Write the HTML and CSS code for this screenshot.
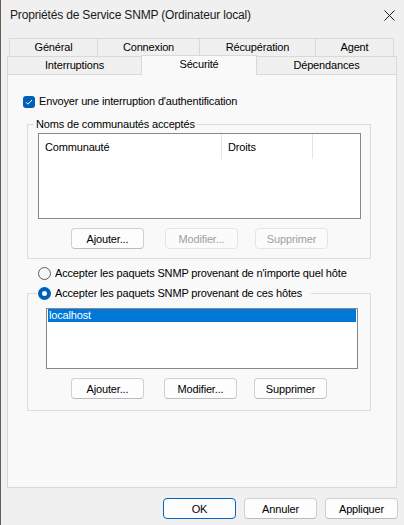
FILE: index.html
```html
<!DOCTYPE html>
<html lang="fr">
<head>
<meta charset="utf-8">
<title>Propriétés de Service SNMP</title>
<link rel="stylesheet" href="styles.css">
</head>
<body>
<div class="window">
  <div class="titlebar">
    <span class="title">Propriétés de Service SNMP (Ordinateur local)</span>
    <svg class="close" width="11" height="11" viewBox="0 0 11 11"><path d="M0.5 0.5 L10.5 10.5 M10.5 0.5 L0.5 10.5" stroke="#1a1a1a" stroke-width="1" fill="none"/></svg>
  </div>
  <div class="tabs">
    <div class="tabrow row1">
      <div class="tab t-general">Général</div>
      <div class="tab t-connexion">Connexion</div>
      <div class="tab t-recup">Récupération</div>
      <div class="tab t-agent last">Agent</div>
    </div>
    <div class="tabrow row2">
      <div class="tab t-interr">Interruptions</div>
      <div class="tab t-secu selected">Sécurité</div>
      <div class="tab t-depend last">Dépendances</div>
    </div>
  </div>
  <div class="panel">
    <div class="check-row">
      <span class="checkbox"><svg width="12" height="12" viewBox="0 0 12 12"><path d="M3 6.2 L5 8.2 L9 4" stroke="#fff" stroke-width="1" fill="none"/></svg></span>
      <span>Envoyer une interruption d'authentification</span>
    </div>
    <fieldset class="group g1">
      <legend class="leg1">Noms de communautés acceptés</legend>
      <div class="listview">
        <div class="lv-header">
          <div class="lv-col col1">Communauté</div>
          <div class="lv-col col2">Droits</div>
        </div>
      </div>
      <div class="btnrow">
        <button class="btn">Ajouter...</button>
        <button class="btn b2" disabled>Modifier...</button>
        <button class="btn b3" disabled>Supprimer</button>
      </div>
    </fieldset>
    <div class="radio-row">
      <span class="radio"></span>
      <span>Accepter les paquets SNMP provenant de n'importe quel hôte</span>
    </div>
    <fieldset class="group g2">
      <legend class="leg2"><span class="radio checked"></span><span>Accepter les paquets SNMP provenant de ces hôtes</span></legend>
      <div class="listbox">
        <div class="item-sel">localhost</div>
      </div>
      <div class="btnrow">
        <button class="btn">Ajouter...</button>
        <button class="btn b2">Modifier...</button>
        <button class="btn b3">Supprimer</button>
      </div>
    </fieldset>
  </div>
  <div class="footer">
    <button class="btn default">OK</button>
    <button class="btn">Annuler</button>
    <button class="btn">Appliquer</button>
  </div>
</div>
</body>
</html>
```
FILE: styles.css
```css
* { box-sizing: border-box; }
html, body { margin: 0; padding: 0; }
body {
  width: 404px;
  height: 525px;
  overflow: hidden;
  background: #f0f0f0;
  font-family: "Liberation Sans", Arial, sans-serif;
  font-size: 11px;
  letter-spacing: -0.16px;
  color: #000;
}
.window {
  height: 525px;
  border-left: 1px solid #6b5a52;
  display: flex;
  flex-direction: column;
}
.titlebar {
  height: 30px;
  display: flex;
  align-items: center;
  justify-content: space-between;
  padding: 0 9px 0 9px;
}
.title { font-size: 12px; color: #1a1a1a; letter-spacing: -0.17px; }
.close { display: block; }

.tabs { margin-top: 8px; }
.tabrow { display: flex; height: 18px; }
.row1 { margin-left: 8px; }
.row2 { margin-left: 6px; }
.tab {
  border: 1px solid #d9d9d9;
  border-bottom: none;
  border-right: none;
  background: #f0f0f0;
  display: flex;
  align-items: center;
  justify-content: center;
  line-height: 13px;
}
.tab.last { border-right: 1px solid #d9d9d9; }
.t-general { width: 88px; }
.t-connexion { width: 102px; }
.t-recup { width: 116px; }
.t-agent { width: 79px; }
.t-interr { width: 134px; }
.t-secu { width: 116px; }
.t-depend { width: 140px; border-left: none; }
.tab.selected {
  height: 20px;
  margin-top: -1px;
  border-right: 1px solid #d9d9d9;
  background: #f9f9f9;
  align-items: flex-start;
  padding-top: 2px;
  position: relative;
  z-index: 1;
}

.panel {
  margin-left: 6px;
  width: 390px;
  height: 414px;
  border: 1px solid #d9d9d9;
  background: #f9f9f9;
  padding: 20px 0 0 15px;
}
.check-row {
  display: flex;
  align-items: center;
  gap: 4px;
  height: 13px;
  line-height: 13px;
}
.checkbox {
  width: 12px;
  height: 12px;
  border-radius: 3px;
  background: #005fb8;
  display: block;
}
.checkbox svg { display: block; }

.group {
  margin: 10px 0 0 4px;
  width: 344px;
  min-width: 0;
  border: 1px solid #dcdcdc;
}
.g1 { padding: 2px 9px 9px 10px; }
.leg1 {
  padding: 0 2px;
  margin-left: -4px;
  line-height: 13px;
}
.listview {
  width: 323px;
  height: 86px;
  border: 1px solid #828790;
  background: #fff;
}
.lv-header { display: flex; height: 25px; }
.lv-col {
  display: flex;
  align-items: center;
  padding-left: 6px;
  border-right: 1px solid #e5e5e5;
}
.col1 { width: 183px; }
.col2 { width: 91px; }

.btnrow { display: flex; margin-top: 9px; }
.g1 .btnrow { padding-left: 33px; }
.g1 .b2 { margin-left: 21px; }
.g1 .b3 { margin-left: 17px; }
.g2 .btnrow { padding-left: 25px; }
.g2 .b2 { margin-left: 20px; }
.g2 .b3 { margin-left: 17px; }

.btn {
  width: 73px;
  height: 21px;
  padding: 0;
  border: 1px solid #d0d0d0;
  border-bottom-color: #bcbcbc;
  border-radius: 4px;
  background: #fdfdfd;
  font-family: inherit;
  font-size: 11px;
  letter-spacing: -0.16px;
  color: #000;
  display: flex;
  align-items: center;
  justify-content: center;
}
.btn:disabled {
  background: #fbfbfb;
  border-color: #e5e5e5;
  color: #a0a0a0;
}
.btn.default { border-color: #0067c0; }

.radio-row {
  display: flex;
  align-items: center;
  gap: 4px;
  height: 13px;
  margin: 8px 0 0 15px;
  line-height: 13px;
}
.radio {
  width: 13px;
  height: 13px;
  border-radius: 50%;
  border: 1px solid #5d5d5d;
  background: #f6f6f6;
  display: block;
  flex: none;
}
.radio.checked {
  border: 4px solid #005fb8;
  background: #fff;
}

.g2 {
  margin-top: 7px;
  padding: 8px 12px 11px 18px;
}
.leg2 {
  display: flex;
  align-items: center;
  gap: 4px;
  padding: 0 9px 0 1px;
  margin-left: -9px;
  line-height: 13px;
}
.listbox {
  width: 312px;
  height: 61px;
  border: 1px solid #828790;
  background: #fff;
  padding: 0 1px;
}
.item-sel {
  height: 13px;
  line-height: 13px;
  background: #0078d7;
  color: #fff;
  padding-left: 1px;
}

.footer {
  display: flex;
  justify-content: flex-end;
  gap: 8px;
  padding: 10px 6px 0 0;
}
```
